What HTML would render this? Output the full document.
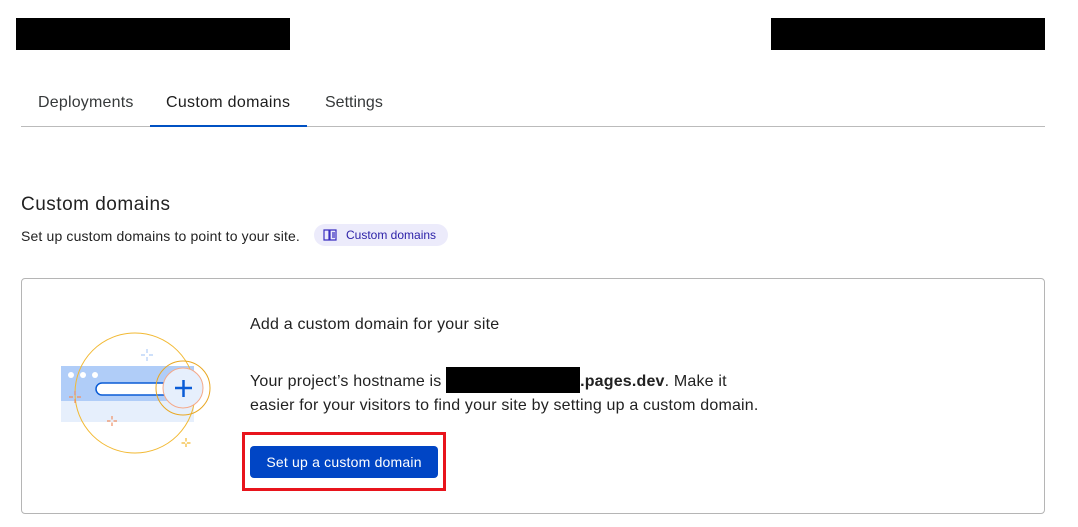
<!DOCTYPE html>
<html><head><style>
body{margin:0;width:1078px;height:527px;background:#fff;font-family:"Liberation Sans",sans-serif;color:#313131;position:relative;overflow:hidden}
.abs{position:absolute}
.tab{position:absolute;top:94px;font-size:16px;color:#36393a}
</style></head><body>
<div class="abs" style="left:16px;top:18px;width:274px;height:32px;background:#000"></div>
<div class="abs" style="left:771px;top:18px;width:274px;height:32px;background:#000"></div>
<div class="tab" style="left:38px;letter-spacing:0.2px">Deployments</div>
<div class="tab" style="left:166px;color:#1d1d1d;letter-spacing:0.3px">Custom domains</div>
<div class="tab" style="left:325px">Settings</div>
<div class="abs" style="left:21px;top:126px;width:1024px;height:1px;background:#bbb"></div>
<div class="abs" style="left:150px;top:125px;width:157px;height:2px;background:#0051c3"></div>
<div class="abs" style="left:21px;top:194px;font-size:19px;color:#222;letter-spacing:0.5px">Custom domains</div>
<div class="abs" style="left:21px;top:228px;font-size:14px;color:#222;letter-spacing:0.15px">Set up custom domains to point to your site.</div>
<div class="abs" style="left:314px;top:224px;width:134px;height:22px;border-radius:11px;background:#ecebfb"></div>
<svg class="abs" style="left:323px;top:229px" width="14" height="12" viewBox="0 0 14 12"><path d="M1 1h5v10H1zM7 1h6v10H7zM9 4h3M9 6h3M9 8h3" fill="none" stroke="#3b2fc0" stroke-width="1.2"/></svg>
<div class="abs" style="left:346px;top:228px;font-size:12px;color:#2d22a8">Custom domains</div>
<div class="abs" style="left:21px;top:278px;width:1022px;height:234px;border:1px solid #b5b5b5;border-radius:4px"></div>
<svg class="abs" style="left:0;top:0" width="240" height="527">
<rect x="61" y="366" width="133" height="56" fill="#e6effc"/>
<rect x="61" y="366" width="133" height="35" fill="#b0cdf8"/>
<circle cx="71" cy="375" r="3" fill="#fff"/><circle cx="83" cy="375" r="3" fill="#fff"/><circle cx="95" cy="375" r="3" fill="#fff"/>
<rect x="96" y="383" width="80" height="12" rx="6" fill="#fff" stroke="#0a5cd6" stroke-width="1.5"/>
<circle cx="135" cy="393" r="60" fill="none" stroke="#f2b933" stroke-width="1"/>
<circle cx="183" cy="388" r="27" fill="none" stroke="#e9a824" stroke-width="1"/>
<circle cx="183" cy="388" r="20" fill="#e6effc" stroke="#f5a98a" stroke-width="1"/>
<path d="M175 388h17M183.5 380v17" stroke="#0a5cd6" stroke-width="2.5"/>
<path d="M147 349v12M141 355h12" stroke="#b0cdf8" stroke-width="1.2" stroke-dasharray="4 4"/>
<path d="M75 391v12M69 397h12" stroke="#f09063" stroke-width="1.2" stroke-dasharray="4 4"/>
<path d="M112 416v10M107 421h10" stroke="#f09063" stroke-width="1.2" stroke-dasharray="3.5 3"/>
<path d="M186 438v9M181.5 443h9" stroke="#f2b933" stroke-width="1.2" stroke-dasharray="3.5 2"/>
</svg>
<div class="abs" style="left:250px;top:316px;font-size:16px;color:#222;letter-spacing:0.2px">Add a custom domain for your site</div>
<div class="abs" style="left:250px;top:367px;font-size:16px;line-height:24px;color:#222;width:600px;letter-spacing:0.18px">Your project’s hostname is <span style="display:inline-block;width:134px;height:26px;background:#000;vertical-align:-7px"></span><b>.pages.dev</b>. Make it<br>easier for your visitors to find your site by setting up a custom domain.</div>
<div class="abs" style="left:242px;top:432px;width:198px;height:53px;border:3px solid #e8141c"></div>
<div class="abs" style="left:250px;top:446px;width:188px;height:32px;background:#0045c5;border-radius:4px;color:#fff;font-size:14px;line-height:32px;text-align:center;letter-spacing:0.2px">Set up a custom domain</div>
</body></html>
